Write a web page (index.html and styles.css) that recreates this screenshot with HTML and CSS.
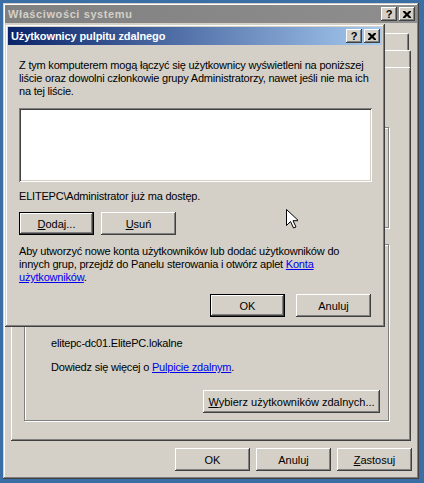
FILE: index.html
```html
<!DOCTYPE html>
<html lang="pl">
<head>
<meta charset="UTF-8" />
<title>Właściwości systemu</title>
<link rel="stylesheet" href="styles.css">
</head>
<body>
  <div class="window sys-window">
    <div class="titlebar inactive">
      <span class="title">Właściwości systemu</span>
      <div class="caption-btns">
        <span class="cbtn">?</span>
        <span class="cbtn"><svg width="8" height="7" viewBox="0 0 8 7"><path d="M0 0h2l2 2 2-2h2v1l-2.5 2.5 2.5 2.5v1h-2l-2-2-2 2h-2v-1l2.5-2.5-2.5-2.5z" fill="#000"/></svg></span>
      </div>
    </div>

    <div class="tabs">
      <div class="tab-row back"><span class="tab"></span><span class="tab"></span></div>
      <div class="tab-row front"><span class="tab"></span><span class="tab"></span></div>
    </div>

    <div class="tabpage">
      <div class="group group-help"></div>
      <div class="group group-remote">
        <p class="line">elitepc-dc01.ElitePC.lokalne</p>
        <p class="line more">Dowiedz się więcej o <a href="#">Pulpicie zdalnym</a>.</p>
        <div class="row-end">
          <button class="btn wide"><u>W</u>ybierz użytkowników zdalnych...</button>
        </div>
      </div>
    </div>

    <div class="button-row main-buttons">
      <button class="btn">OK</button>
      <button class="btn">Anuluj</button>
      <button class="btn"><u>Z</u>astosuj</button>
    </div>

    <!-- modal dialog over the properties window -->
    <div class="window users-dialog">
      <div class="titlebar active">
        <span class="title">Użytkownicy pulpitu zdalnego</span>
        <div class="caption-btns">
          <span class="cbtn">?</span>
          <span class="cbtn"><svg width="8" height="7" viewBox="0 0 8 7"><path d="M0 0h2l2 2 2-2h2v1l-2.5 2.5 2.5 2.5v1h-2l-2-2-2 2h-2v-1l2.5-2.5-2.5-2.5z" fill="#000"/></svg></span>
        </div>
      </div>
      <div class="dialog-body">
        <p class="text intro">Z tym komputerem mogą łączyć się użytkownicy wyświetleni na poniższej<br>liście oraz dowolni członkowie grupy Administratorzy, nawet jeśli nie ma ich<br>na tej liście.</p>
        <div class="listbox"></div>
        <p class="text status">ELITEPC\Administrator już ma dostęp.</p>
        <div class="button-row left">
          <button class="btn default"><u>D</u>odaj...</button>
          <button class="btn"><u>U</u>suń</button>
        </div>
        <p class="text hint">Aby utworzyć nowe konta użytkowników lub dodać użytkowników do<br>innych grup, przejdź do Panelu sterowania i otwórz aplet <a href="#">Konta<br>użytkowników</a>.</p>
        <div class="button-row right">
          <button class="btn default">OK</button>
          <button class="btn">Anuluj</button>
        </div>
      </div>
    </div>

    <svg class="cursor" width="12" height="20" viewBox="0 0 12 20"><path d="M0.5 0.5v16l4-4 3 6.5 2.5-1-3-6.3h5.5z" fill="#fff" stroke="#000" stroke-width="1"/></svg>
  </div>
</body>
</html>
```

FILE: styles.css
```css
*, *::before, *::after {
  box-sizing: border-box;
}
body {
  margin: 0;
  width: 424px;
  height: 483px;
  background: #3a6ea5;
  font-family: "Liberation Sans", Arial, sans-serif;
  font-size: 11px;
  color: #000;
  overflow: hidden;
}
p {
  margin: 0;
}
a {
  color: #0000ee;
  text-decoration: underline;
}

/* window frame */
.window {
  background: #d4d0c8;
  box-shadow: inset -1px -1px #404040, inset 1px 1px #d4d0c8,
              inset -2px -2px #808080, inset 2px 2px #fff;
}
.sys-window {
  position: relative;
  margin: 3px 0 0 3px;
  width: 416px;
  height: 476px;
  padding: 2px;
  display: flex;
  flex-direction: column;
}
.titlebar {
  height: 18px;
  display: flex;
  align-items: center;
  justify-content: space-between;
  padding: 0 2px 0 2px;
}
.titlebar .title {
  font-weight: bold;
  font-size: 11px;
  padding-left: 1px;
  white-space: nowrap;
}
.titlebar.inactive {
  background: linear-gradient(to right, #808080, #8e8e8e);
  color: #d4d0c8;
}
.titlebar.inactive .title {
  letter-spacing: 0.6px;
}
.titlebar.active {
  background: linear-gradient(to right, #0a246a, #a6caf0);
  color: #fff;
}
.titlebar.active .title {
  letter-spacing: -0.1px;
}
.caption-btns {
  display: flex;
  gap: 2px;
}
.cbtn {
  width: 16px;
  height: 14px;
  display: flex;
  align-items: center;
  justify-content: center;
  font-weight: bold;
  font-size: 11px;
  color: #000;
  background: #d4d0c8;
  box-shadow: inset -1px -1px #404040, inset 1px 1px #fff,
              inset -2px -2px #808080;
}

/* tabs */
.tabs {
  margin: 10px 6px 0 6px;
}
.tab-row {
  height: 17px;
  display: flex;
  justify-content: flex-end;
}
.tab-row.back {
  padding-right: 2px;
}
.tab {
  width: 90px;
  height: 17px;
  border-top: 1px solid #fff;
  border-left: 1px solid #fff;
  border-right: 1px solid #404040;
  box-shadow: inset -1px 0 #808080;
  border-radius: 2px 2px 0 0;
}

.tabpage {
  margin: 0 6px;
  height: 374px;
  padding: 60px 22px 0 13px;
  box-shadow: inset -1px -1px #404040, inset 1px 1px #fff,
              inset -2px -2px #808080;
}
.group {
  border: 1px solid #808080;
  box-shadow: inset 1px 1px #fff, 1px 1px #fff;
}
.group-help {
  height: 101px;
}
.group-remote {
  margin-top: 16px;
  height: 177px;
  padding: 92px 8px 0 26px;
  letter-spacing: -0.2px;
}
.line {
  line-height: 13px;
  white-space: nowrap;
}
.line.more {
  margin-top: 11px;
}
.row-end {
  display: flex;
  justify-content: flex-end;
  margin-top: 16px;
}

/* buttons */
.btn {
  width: 75px;
  height: 23px;
  padding: 0;
  border: none;
  background: #d4d0c8;
  font-family: inherit;
  font-size: 11px;
  color: #000;
  white-space: nowrap;
  box-shadow: inset -1px -1px #404040, inset 1px 1px #fff,
              inset -2px -2px #808080, inset 2px 2px #d4d0c8;
}
.btn.default {
  box-shadow: inset 0 0 0 1px #000, inset -2px -2px #404040, inset 2px 2px #fff,
              inset -3px -3px #808080;
}
.btn.wide {
  width: 177px;
}
.button-row {
  display: flex;
  gap: 6px;
}
.main-buttons {
  justify-content: flex-end;
  margin: 7px 5px 0 0;
}

/* modal dialog */
.users-dialog {
  position: absolute;
  left: 2px;
  top: 21px;
  width: 380px;
  height: 303px;
  padding: 3px;
}
.dialog-body {
  padding: 14px 10px 0 11px;
}
.text {
  line-height: 13px;
  white-space: nowrap;
  letter-spacing: -0.2px;
}
.listbox {
  margin-top: 10px;
  height: 74px;
  background: #fff;
  box-shadow: inset 1px 1px #808080, inset -1px -1px #fff,
              inset 2px 2px #404040, inset -2px -2px #d4d0c8;
}
.status {
  margin-top: 8px;
}
.button-row.left {
  margin-top: 9px;
  gap: 7px;
}
.hint {
  margin-top: 10px;
}
.button-row.right {
  justify-content: flex-end;
  margin-top: 10px;
  padding-right: 1px;
  gap: 11px;
}

.cursor {
  position: absolute;
  left: 283px;
  top: 206px;
}
```
